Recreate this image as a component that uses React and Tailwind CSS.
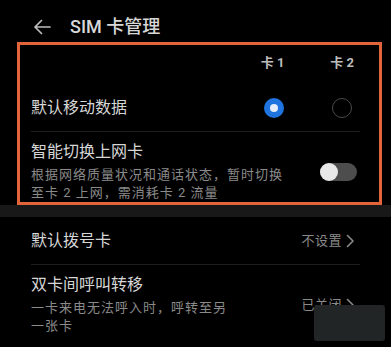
import React from "react";

const FONT = { fontFamily: 'Roboto, "Noto Sans CJK SC", sans-serif' };

function Chevron() {
  return (
    <svg width="9" height="14" viewBox="0 0 9 14" fill="none" className="ml-[4px]">
      <path d="M1.5 1.5 L7 7 L1.5 12.5" stroke="#8a8a8a" strokeWidth="1.6" strokeLinecap="round" strokeLinejoin="round" />
    </svg>
  );
}

function Divider() {
  return <div className="mx-[31px] h-px bg-[#1e1e1e]" />;
}

export default function App() {
  return (
    <div className="relative w-[391px] h-[347px] overflow-hidden bg-black text-[#d6d6d6]" style={FONT}>
      {/* Header */}
      <div className="h-[42px] pt-[17px]">
        <div className="flex items-center h-[20px]">
          <svg width="18" height="16" viewBox="0 0 18 16" fill="none" className="ml-[33px]">
            <path d="M17 8 H2 M8.5 1.5 L2 8 L8.5 14.5" stroke="#bdbdbd" strokeWidth="1.7" strokeLinecap="round" strokeLinejoin="round" />
          </svg>
          <span className="ml-[19px] text-[18px] leading-[20px] font-medium text-[#d8d8d8]">SIM 卡管理</span>
        </div>
      </div>

      {/* Card data section */}
      <div className="h-[163px]">
        <div className="h-[42px] flex items-center pl-[31px] pr-[39px]">
          <div className="flex-1" />
          <div className="w-[20px] flex justify-center">
            <span className="whitespace-nowrap text-[13px] font-bold text-[#bdbdbd] mr-[3px]">卡 1</span>
          </div>
          <div className="w-[20px] ml-[48px] flex justify-center">
            <span className="whitespace-nowrap text-[13px] font-bold text-[#bdbdbd]">卡 2</span>
          </div>
        </div>
        <div className="h-[47px] flex items-center pl-[31px] pr-[39px]">
          <span className="flex-1 text-[16px] leading-[20px]">默认移动数据</span>
          <div className="w-[20px] h-[20px] rounded-full bg-[#1f74e0] flex items-center justify-center">
            <div className="w-[8px] h-[8px] rounded-full bg-[#e6eefc]" />
          </div>
          <div className="w-[20px] h-[20px] ml-[48px] rounded-full border-[1.5px] border-[#4a4a4a]" />
        </div>
        <Divider />
        <div className="flex items-center pl-[31px] pr-[34px] pt-[10px]">
          <div className="flex-1">
            <div className="text-[16px] leading-[20px]">智能切换上网卡</div>
            <div className="mt-[4px] w-[260px] text-[13px] leading-[18px] tracking-[1px] text-[#8a8a8a]">
              根据网络质量状况和通话状态，暂时切换至卡 2 上网，需消耗卡 2 流量
            </div>
          </div>
          <div className="relative w-[37px] h-[18px] rounded-full bg-[#4d4d4d]">
            <div className="absolute left-0 top-0 w-[18px] h-[18px] rounded-full bg-[#e8e8e8]" />
          </div>
        </div>
      </div>

      {/* Section gap band */}
      <div className="h-[12px] bg-[#181818]" />

      {/* Call settings section */}
      <div className="h-[47px] flex items-center pl-[31px] pr-[36px]">
        <span className="flex-1 text-[16px] leading-[20px]">默认拨号卡</span>
        <span className="text-[13px] tracking-[0.5px] text-[#8a8a8a]">不设置</span>
        <Chevron />
      </div>
      <Divider />
      <div className="flex items-center pl-[31px] pr-[36px] pt-[10px]">
        <div className="flex-1">
          <div className="text-[16px] leading-[20px]">双卡间呼叫转移</div>
          <div className="mt-[4px] w-[200px] text-[13px] leading-[18px] tracking-[1px] text-[#8a8a8a]">
            一卡来电无法呼入时，呼转至另一张卡
          </div>
        </div>
        <span className="text-[13px] tracking-[0.5px] text-[#8a8a8a]">已关闭</span>
        <Chevron />
      </div>

      {/* Orange annotation frame */}
      <div className="absolute left-[17px] top-[42px] w-[365px] h-[163px] border-[3px] border-[#e2643b] pointer-events-none" />
      {/* Watermark smudge */}
      <div className="absolute left-[314px] top-[305px] w-[71px] h-[36px] rounded-[3px] bg-[#222525] pointer-events-none" />
    </div>
  );
}
